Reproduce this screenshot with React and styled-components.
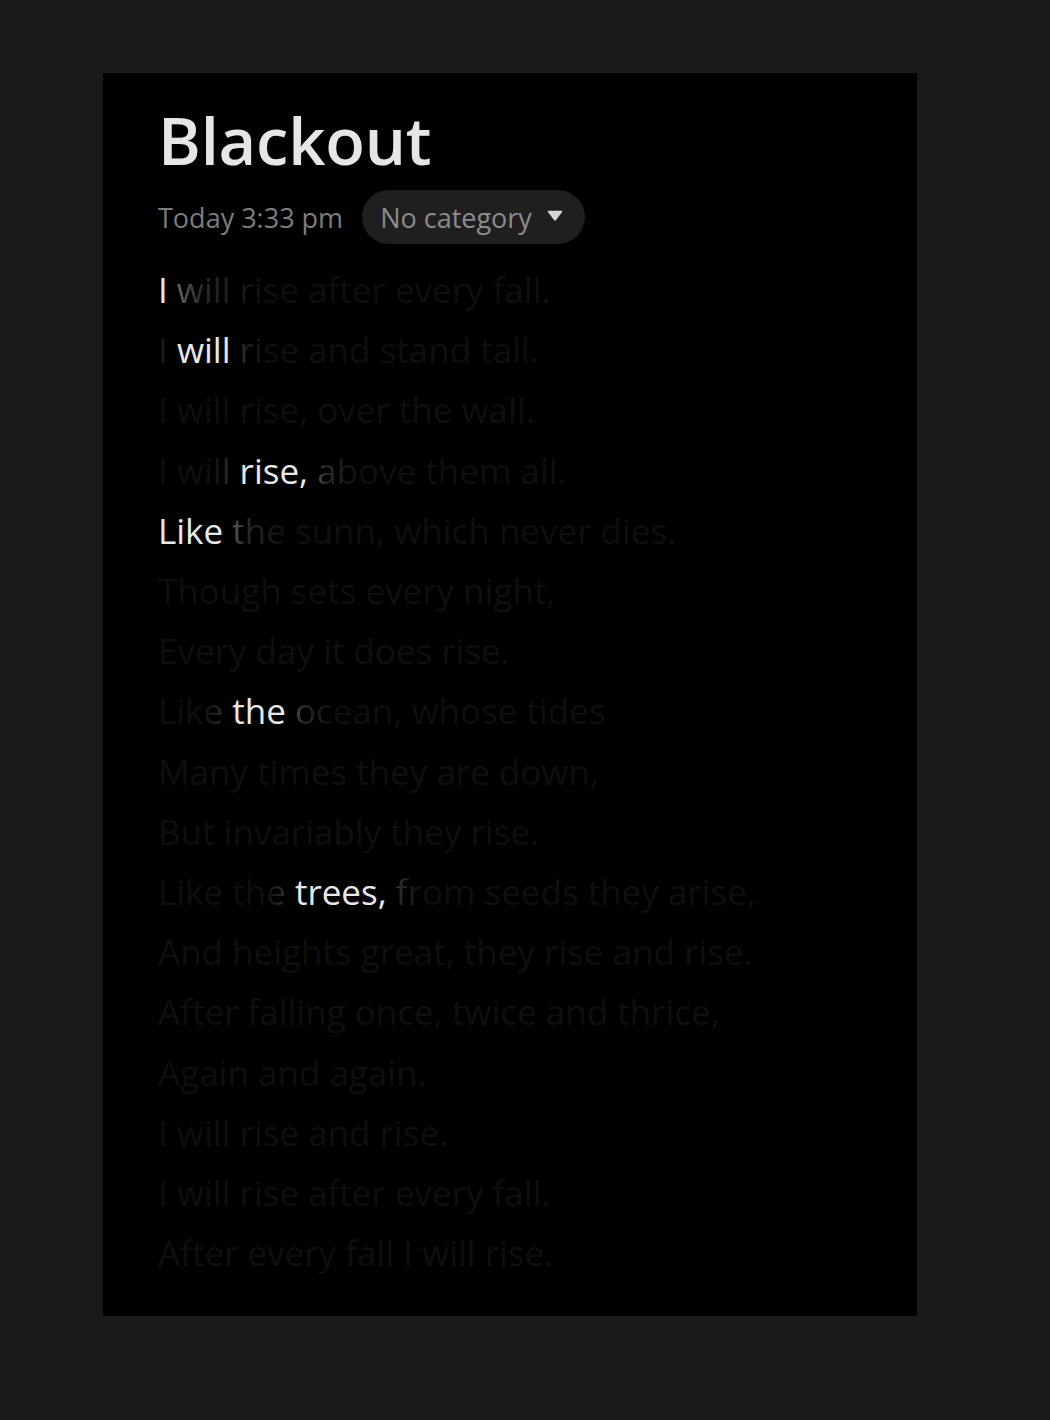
import styled, { createGlobalStyle } from "styled-components";

const GlobalStyle = createGlobalStyle`
    html, body {
        margin: 0;
        padding: 0;
        background: #1a1a1a;
    }
    * {
        box-sizing: border-box;
    }
`

const DIM = "#0f0f0f";

// each line split in parts: d = dim, l = lit, o = fading out, i = fading in
const poem = [
    [["l", "I"], ["o", " will ri"], ["d", "se after every fall."]],
    [["i", "I "], ["l", "will"], ["o", " ri"], ["d", "se and stand tall."]],
    [["d", "I will rise, over the wall."]],
    [["d", "I wi"], ["i", "ll "], ["l", "rise,"], ["o", " ab"], ["d", "ove them all."]],
    [["l", "Like"], ["o", " the"], ["d", " sunn, which never dies."]],
    [["d", "Though sets every night,"]],
    [["d", "Every day it does rise."]],
    [["d", "Lik"], ["i", "e "], ["l", "the"], ["o", " oc"], ["d", "ean, whose tides"]],
    [["d", "Many times they are down,"]],
    [["d", "But invariably they rise."]],
    [["d", "Like th"], ["i", "e "], ["l", "trees,"], ["o", " fr"], ["d", "om seeds they arise,"]],
    [["d", "And heights great, they rise and rise."]],
    [["d", "After falling once, twice and thrice,"]],
    [["d", "Again and again."]],
    [["d", "I will rise and rise."]],
    [["d", "I will rise after every fall."]],
    [["d", "After every fall I will rise."]],
];

export default function App() {
    return (
        <>
            <GlobalStyle />
            <Page>
                <Note>
                    <Title>Blackout</Title>
                    <Meta>
                        <Date>Today 3:33 pm</Date>
                        <Category>
                            No category
                            <svg width="16" height="12" viewBox="0 0 16 12">
                                <path d="M1.5 1.5 L14.5 1.5 L8 10 Z" fill="#d8d8d8" stroke="#d8d8d8" strokeWidth="1.5" strokeLinejoin="round" />
                            </svg>
                        </Category>
                    </Meta>
                    <Poem>
                        {poem.map((line, i) => (
                            <Line key={i}>
                                {line.map(([kind, text], j) => (
                                    <Part key={j} $kind={kind}>{text}</Part>
                                ))}
                            </Line>
                        ))}
                    </Poem>
                </Note>
            </Page>
        </>
    )
}

const Page = styled.div`
    min-height: 1420px;
    padding: 73px 0 0 103px;
    background: #1a1a1a;
`
const Note = styled.div`
    width: 814px;
    height: 1243px;
    background: #000000;
    padding: 25px 55px 0 55px;
    font-family: 'Open Sans', 'Noto Sans', sans-serif;
`
const Title = styled.h1`
    margin: 0;
    font-size: 65px;
    line-height: 84px;
    font-weight: 600;
    color: #e6e6e6;
    letter-spacing: -0.2px;
`
const Meta = styled.div`
    display: flex;
    align-items: center;
    gap: 19px;
    margin-top: 8px;
`
const Date = styled.span`
    font-size: 27px;
    color: #7c7c7c;
`
const Category = styled.div`
    display: flex;
    align-items: center;
    gap: 15px;
    height: 54px;
    padding: 0 22px 0 18px;
    border-radius: 27px;
    background: #1f1f1f;
    font-size: 27px;
    color: #8c8c8c;
    svg {
        margin-top: -2px;
    }
`
const Poem = styled.div`
    margin-top: 16px;
    font-size: 35px;
    line-height: 60.2px;
    color: ${DIM};
`
const Line = styled.div`
    white-space: pre;
`
const gradients = {
    o: `linear-gradient(to right, #7a7a7a 0%, #2a2a2a 35%, ${DIM} 100%)`,
    i: `linear-gradient(to right, ${DIM} 0%, #2a2a2a 60%, #7a7a7a 100%)`,
}
const Part = styled.span`
    color: ${({ $kind }) => ($kind === "l" ? "#e8e8e8" : DIM)};
    ${({ $kind }) => gradients[$kind] && `
        background: ${gradients[$kind]};
        -webkit-background-clip: text;
        background-clip: text;
        color: transparent;
    `}
`
